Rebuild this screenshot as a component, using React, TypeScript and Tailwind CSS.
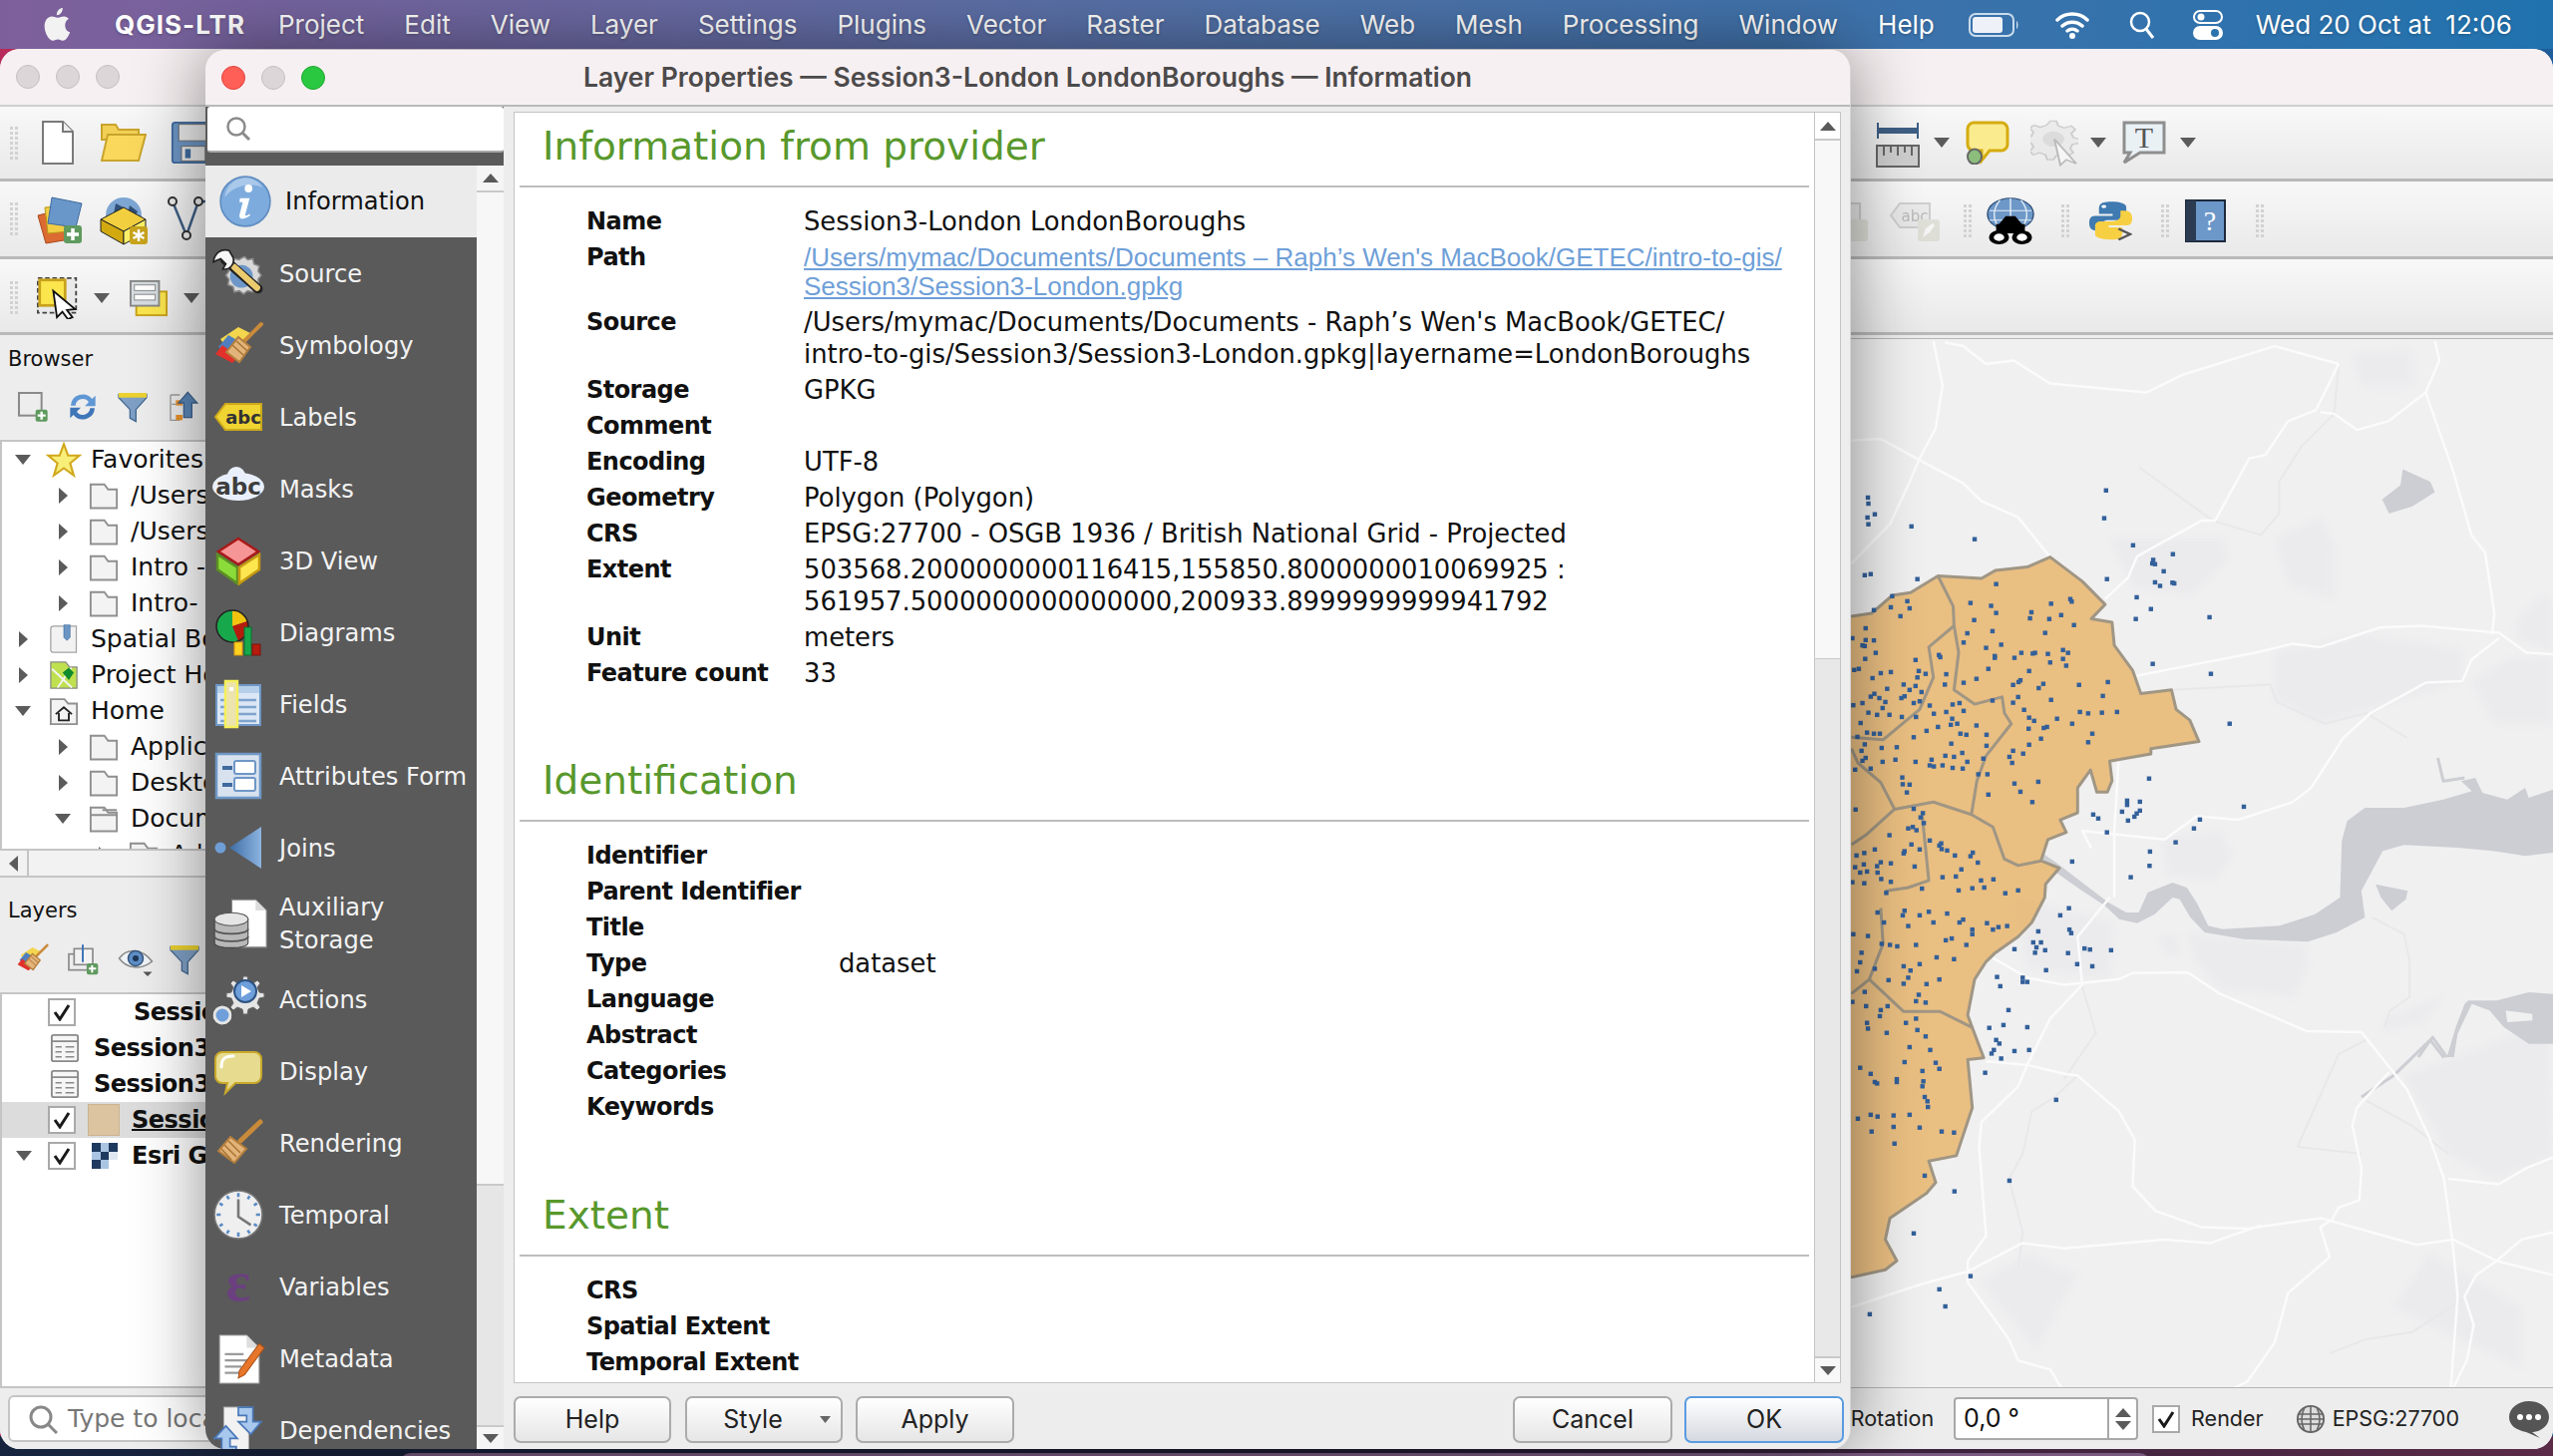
import type { ReactNode } from 'react';

type Pt = [number, number];

// coordinates below were read off crops of the map, these turn them into page pixels
const top = (p: Pt[]) => p.map(([x, y]) => `${(1840 + x / 2.178).toFixed(1)},${(340 + y / 2.8).toFixed(1)}`).join(' ');
const low = (p: Pt[]) => p.map(([x, y]) => `${(1840 + x / 2.178).toFixed(1)},${(900 + y / 2.8).toFixed(1)}`).join(' ');
const mid = (p: Pt[]) => p.map(([x, y]) => `${(2000 + x / 2.8).toFixed(1)},${(760 + y / 3).toFixed(1)}`).join(' ');

const boroughEdgeTop: Pt[] = [[-900, 778], [36, 778], [80, 770], [125, 720], [165, 712], [225, 665], [320, 672], [350, 650], [420, 640], [470, 612], [540, 680], [590, 745], [560, 785], [605, 795], [610, 860], [650, 930], [668, 995], [735, 985], [745, 1040], [775, 1070], [795, 1130], [690, 1150], [690, 1165], [600, 1185], [605, 1240], [595, 1272], [572, 1272], [558, 1210], [530, 1260], [530, 1330], [492, 1350], [505, 1385], [465, 1405], [450, 1465], [490, 1485], [460, 1530]];
const boroughEdgeLow: Pt[] = [[458, 0], [430, 70], [400, 110], [350, 155], [330, 180], [305, 230], [290, 330], [300, 365], [325, 450], [290, 455], [300, 590], [265, 725], [205, 740], [220, 800], [200, 830], [120, 900], [110, 960], [135, 1020], [110, 1045], [40, 1065], [-900, 1065]];

const innerTop: Pt[][] = [
  [[225, 665], [258, 750], [260, 805], [270, 880], [260, 985], [305, 1025], [365, 1005], [370, 1050], [385, 1080], [330, 1170], [310, 1240], [298, 1335]],
  [[260, 805], [205, 865], [215, 950], [185, 1040], [105, 1125], [36, 1118]],
  [[36, 1150], [50, 1190], [100, 1245], [130, 1320], [215, 1300], [298, 1335], [345, 1370], [370, 1460], [400, 1478], [450, 1465]],
  [[130, 1320], [70, 1390], [36, 1420]],
  [[190, 1330], [205, 1520], [160, 1540], [110, 1550]],
];
const innerLow: Pt[][] = [
  [[100, 30], [105, 130], [75, 230], [150, 320], [230, 320], [300, 365]],
  [[75, 230], [36, 270]],
];

const roadsTop: Pt[][] = [
  [[215, 5], [235, 130], [220, 250], [185, 335], [160, 410], [120, 520], [36, 630]],
  [[36, 285], [100, 280], [185, 340], [280, 405], [320, 455], [400, 500], [470, 612]],
  [[240, 10], [280, 20], [330, 70], [390, 60], [470, 125], [680, 150], [760, 100], [960, 20], [1100, 70]],
  [[1100, 70], [1050, 200], [990, 230], [940, 325], [905, 335], [830, 510], [800, 510], [660, 610], [640, 670], [590, 730]],
  [[1060, 205], [1090, 210], [1140, 255], [1210, 230], [1290, 150], [1320, 60], [1310, 5]],
  [[1290, 150], [1350, 370], [1390, 550], [1420, 600], [1440, 770], [1435, 830]],
  [[660, 945], [920, 880], [1000, 855], [1060, 865], [1190, 810], [1280, 805], [1450, 825], [1510, 880], [1568, 885]],
  [[1450, 840], [1390, 900], [1370, 960], [1290, 965], [1170, 1050], [1110, 1120], [1040, 1260], [1000, 1300], [880, 1350], [790, 1340], [720, 1405], [610, 1390], [540, 1380], [560, 1430]],
  [[620, 1170], [610, 1380], [610, 1568]],
];
const roadsLow: Pt[][] = [
  [[600, 0], [530, 110], [540, 245], [470, 340], [420, 470], [400, 530], [320, 630], [315, 700], [330, 950], [290, 1020], [290, 1080], [380, 1240], [400, 1300], [470, 1325], [495, 1378]],
  [[345, 170], [420, 225], [500, 245], [620, 230], [650, 212], [770, 210], [840, 270], [1030, 375], [1150, 378], [1250, 540], [1300, 680], [1330, 790], [1350, 980], [1360, 1120], [1345, 1378]],
  [[330, 460], [420, 470], [500, 495], [530, 500], [620, 600], [655, 680], [650, 810], [700, 880], [800, 925], [900, 930], [1060, 900], [1200, 950], [1270, 975], [1350, 960], [1445, 1020], [1568, 1060]],
  [[36, 1150], [190, 1085], [290, 1050], [410, 970], [500, 985], [720, 960], [820, 970], [930, 920]],
  [[1210, 490], [1140, 590], [1130, 640], [1150, 760], [1145, 850], [1100, 870], [1085, 905], [1060, 925], [1080, 1010], [990, 1110], [960, 1250], [900, 1360], [870, 1378]],
  [[1445, 1020], [1400, 1060], [1375, 1120], [1395, 1200], [1380, 1300], [1350, 1378]],
  [[1445, 1020], [1500, 960], [1568, 940]],
  [[1340, 790], [1450, 805], [1510, 760], [1568, 730]],
];

const dotsTop: Pt[] = [[592, 425], [588, 503], [651, 579], [738, 604], [695, 620], [693, 630], [699, 632], [718, 652], [594, 674], [699, 683], [710, 693], [737, 684], [741, 686], [659, 725], [690, 758], [657, 786], [818, 781], [694, 912], [821, 940], [862, 1080], [686, 1234], [893, 1313], [638, 1296], [638, 1308], [666, 1299], [627, 1327], [666, 1324], [659, 1332], [654, 1341], [640, 1352], [564, 1335], [575, 1346], [594, 1385], [797, 1349], [784, 1374], [744, 1413], [688, 1439], [687, 1479], [646, 1511], [518, 1467], [72, 445], [73, 462], [87, 492], [71, 501], [73, 520], [167, 526], [305, 562], [65, 663], [78, 660], [180, 674], [125, 722], [85, 761], [122, 753], [158, 736], [163, 756], [143, 778], [352, 688], [296, 741], [341, 749], [352, 769], [304, 789], [289, 826], [344, 820], [281, 852], [330, 867], [363, 858], [349, 890], [349, 895], [407, 881], [392, 895], [432, 883], [437, 881], [465, 884], [498, 873], [509, 881], [498, 898], [470, 908], [505, 917], [424, 932], [335, 926], [309, 954], [281, 965], [240, 970], [243, 941], [405, 958], [401, 963], [389, 971], [445, 980], [455, 968], [533, 971], [596, 963], [585, 1002], [472, 1013], [400, 1005], [389, 1021], [344, 1015], [413, 1041], [535, 1047], [553, 1051], [583, 1049], [616, 1047], [424, 1063], [435, 1072], [485, 1066], [518, 1080], [423, 1094], [456, 1092], [463, 1089], [562, 1108], [553, 1132], [450, 1122], [424, 1139], [389, 1156], [411, 1164], [381, 1173], [387, 1190], [324, 1178], [333, 1222], [313, 1222], [392, 1248], [444, 1243], [405, 1271], [335, 1279], [431, 1300], [472, 743], [514, 730], [517, 737], [429, 767], [426, 784], [468, 786], [494, 775], [522, 803], [459, 825], [67, 812], [38, 840], [67, 845], [85, 846], [60, 860], [65, 862], [89, 881], [66, 898], [176, 901], [227, 887], [230, 893], [42, 929], [52, 926], [100, 938], [122, 935], [183, 932], [198, 940], [180, 950], [82, 952], [150, 970], [176, 974], [163, 985], [114, 982], [86, 996], [78, 1004], [97, 1008], [145, 1008], [152, 1003], [189, 991], [110, 1019], [60, 1022], [40, 1028], [172, 1022], [185, 1017], [207, 1029], [257, 1026], [272, 1022], [281, 1044], [243, 1047], [216, 1052], [104, 1036], [73, 1049], [92, 1055], [119, 1055], [146, 1061], [177, 1061], [256, 1066], [225, 1089], [267, 1080], [253, 1083], [309, 1085], [56, 1078], [70, 1105], [85, 1108], [98, 1108], [49, 1117], [200, 1100], [172, 1118], [274, 1108], [287, 1111], [331, 1111], [254, 1136], [331, 1142], [65, 1138], [102, 1148], [135, 1146], [58, 1156], [67, 1176], [60, 1184], [132, 1181], [104, 1187], [176, 1187], [211, 1181], [207, 1197], [216, 1200], [235, 1197], [241, 1170], [260, 1173], [278, 1162], [289, 1187], [257, 1204], [279, 1206], [78, 1206], [44, 1209], [147, 1231], [148, 1250], [163, 1251], [157, 1273], [45, 1321], [172, 1319], [192, 1331], [187, 1343], [194, 1359], [160, 1374], [170, 1370], [178, 1379], [119, 1393], [207, 1408], [232, 1416], [228, 1422], [233, 1432], [245, 1436], [167, 1419], [87, 1433], [152, 1438], [150, 1444], [185, 1433], [64, 1443], [47, 1450], [262, 1450], [301, 1442], [296, 1452], [312, 1470], [122, 1472], [100, 1469], [92, 1480], [63, 1475], [44, 1483], [174, 1481], [276, 1489], [55, 1498], [70, 1495], [93, 1498], [101, 1516], [122, 1524], [235, 1511], [264, 1509], [346, 1517], [319, 1520], [300, 1542], [326, 1540], [400, 1548], [372, 1556], [270, 1548], [64, 1528], [38, 1525], [190, 1543], [112, 1555]];
const dotsLow: Pt[] = [[93, 42], [107, 70], [152, 37], [148, 50], [185, 50], [205, 40], [215, 70], [245, 45], [160, 80], [272, 70], [280, 62], [300, 90], [300, 103], [332, 72], [345, 90], [357, 83], [376, 80], [72, 108], [40, 103], [102, 130], [120, 133], [136, 137], [177, 133], [242, 120], [255, 115], [287, 133], [58, 155], [55, 182], [222, 168], [260, 173], [150, 193], [165, 205], [185, 187], [87, 200], [48, 207], [117, 232], [160, 225], [228, 230], [150, 242], [200, 243], [65, 265], [183, 273], [177, 291], [198, 295], [38, 293], [68, 305], [115, 305], [100, 316], [98, 333], [177, 340], [70, 352], [155, 352], [72, 368], [180, 372], [113, 380], [198, 390], [163, 420], [208, 428], [152, 462], [220, 464], [228, 481], [55, 478], [78, 495], [191, 487], [135, 510], [135, 518], [92, 522], [87, 518], [193, 516], [191, 530], [196, 560], [202, 572], [203, 588], [50, 621], [78, 610], [93, 615], [128, 612], [163, 610], [128, 644], [185, 646], [80, 657], [233, 657], [260, 660], [130, 691], [196, 781], [511, 30], [492, 50], [444, 95], [512, 90], [516, 100], [433, 126], [450, 126], [440, 140], [437, 155], [459, 148], [392, 145], [509, 156], [545, 143], [557, 146], [603, 148], [529, 187], [562, 193], [461, 204], [354, 223], [410, 225], [410, 237], [420, 237], [361, 249], [379, 316], [337, 366], [368, 358], [420, 364], [352, 400], [359, 410], [347, 428], [342, 438], [392, 431], [424, 428], [363, 452], [328, 492], [483, 568], [381, 795], [261, 825], [172, 943], [296, 1063], [228, 1100], [241, 1148], [76, 1170]];

const MapCanvas = () => (
  <svg viewBox="600 340 1960 1052" className="block w-[1960px] h-[1052px]">
    <rect x="600" y="340" width="1960" height="1052" fill="#f0f0f1" />
    <g fill="#ebebed" className="blur-[3px]">
      <polygon points={top([[600, 560], [760, 560], [850, 560], [860, 620], [780, 720], [650, 700]])} />
      <polygon points={top([[960, 560], [1060, 500], [1090, 580], [1090, 730], [990, 690]])} />
      <polygon points={top([[960, 880], [1150, 830], [1370, 870], [1370, 960], [1170, 1040], [1060, 1080], [960, 1010]])} />
      <polygon points={top([[1130, 40], [1260, 30], [1260, 130], [1150, 130]])} />
      <polygon points={top([[1490, 790], [1540, 720], [1568, 730], [1568, 880], [1490, 840]])} />
      <polygon points={top([[1390, 960], [1470, 900], [1568, 890], [1568, 1080], [1440, 1080]])} />
      <polygon points={mid([[470, 240], [630, 220], [670, 290], [620, 370], [480, 350]])} />
      <polygon points={mid([[570, 620], [540, 530], [870, 560], [880, 630], [840, 720], [640, 700]])} />
      <polygon points={mid([[460, 540], [510, 530], [520, 600], [480, 590]])} />
      <polygon points={mid([[1100, 780], [1260, 720], [1200, 800], [1090, 820]])} />
      <polygon points={low([[1240, 500], [1560, 350], [1568, 730], [1440, 790], [1340, 720]])} />
      <polygon points={low([[1220, 1150], [1300, 1000], [1500, 1150], [1500, 1320], [1380, 1250]])} />
      <polygon points={low([[320, 1080], [420, 1000], [530, 1060], [440, 1270]])} />
      <polygon points={low([[390, 0], [610, 70], [600, 230], [420, 200]])} />
    </g>
    <g fill="none" stroke="#e8e8ea" strokeWidth="2" className="blur-[0.5px]">
      <polyline points={top([[665, 360], [825, 510], [930, 550], [970, 490], [970, 400], [1020, 300], [1090, 210], [1100, 70]])} />
      <polyline points={top([[740, 985], [950, 970], [965, 1020], [1070, 1080], [1160, 1050], [1250, 1120]])} />
      <polyline points={low([[530, 500], [480, 560], [430, 600], [410, 720], [380, 790], [410, 940], [400, 1040]])} />
      <polyline points={low([[1010, 700], [1100, 440], [1160, 400]])} />
      <polyline points={low([[1010, 700], [1150, 720]])} />
      <polyline points={low([[540, 250], [570, 380], [500, 510]])} />
      <polyline points={low([[1160, 570], [1260, 640], [1340, 720]])} />
      <polyline points={low([[1080, 1280], [1160, 1240], [1260, 1220], [1370, 1130]])} />
      <polyline points={mid([[1060, 480], [1150, 530], [1165, 610], [1165, 720], [1110, 760], [1095, 810]])} />
    </g>
    <g fill="#cdced3">
      <polygon points={top([[1240, 365], [1300, 400], [1310, 430], [1260, 470], [1210, 490], [1195, 450], [1235, 410]])} />
      <polygon points={mid([[1568, 95], [1500, 120], [1490, 90], [1440, 125], [1370, 105], [1350, 60], [1310, 70], [1340, 100], [1260, 125], [1150, 150], [1040, 150], [990, 190], [975, 250], [970, 420], [900, 470], [800, 505], [640, 515], [600, 505], [570, 440], [540, 390], [500, 375], [430, 405], [405, 465], [370, 465], [320, 435], [240, 370], [180, 320], [140, 290], [135, 305], [180, 350], [240, 395], [310, 445], [350, 485], [400, 497], [450, 470], [500, 420], [520, 425], [550, 480], [590, 525], [700, 545], [880, 553], [960, 525], [1040, 480], [1030, 400], [1060, 340], [1090, 280], [1150, 262], [1300, 270], [1400, 280], [1490, 295], [1568, 285]])} />
      <polygon points={mid([[1330, 730], [1410, 730], [1500, 705], [1568, 710], [1568, 860], [1500, 860], [1430, 810], [1390, 760], [1340, 740], [1300, 830], [1290, 900], [1270, 900], [1295, 810], [1320, 740]])} />
      <polygon points={mid([[1070, 380], [1160, 400], [1155, 425], [1115, 460], [1085, 420]])} />
      <polygon points={mid([[1435, 760], [1510, 770], [1510, 790], [1440, 795]])} fill="#f0f0f1" />
    </g>
    <g fill="none" stroke="#cdced3" strokeWidth="3" strokeLinejoin="round">
      <polyline points={mid([[1245, 0], [1260, 70], [1320, 60]])} />
      <polyline points={low([[1330, 450], [1300, 400], [1220, 500], [1150, 560]])} />
      <polyline points={mid([[1190, 900], [1230, 840], [1270, 900]])} />
    </g>
    <g fill="none" stroke="#fbfbfb" strokeWidth="2.5" strokeLinejoin="round">
      {roadsTop.map((r, i) => <polyline key={i} points={top(r)} />)}
      {roadsLow.map((r, i) => <polyline key={i} points={low(r)} />)}
    </g>
    <polygon points={`${top(boroughEdgeTop)} ${low(boroughEdgeLow)}`} fill="#e8b56c" fillOpacity="0.84" stroke="#a09684" strokeWidth="3" strokeLinejoin="round" />
    <g fill="none" stroke="#a09684" strokeWidth="3" strokeLinejoin="round">
      {innerTop.map((r, i) => <polyline key={i} points={top(r)} />)}
      {innerLow.map((r, i) => <polyline key={i} points={low(r)} />)}
    </g>
    <g fill="#33609a">
      {dotsTop.map(([x, y], i) => <rect key={i} x={1840 + x / 2.178 - 2.2} y={340 + y / 2.8 - 2.2} width="4.400" height="4.400" />)}
      {dotsLow.map(([x, y], i) => <rect key={i} x={1840 + x / 2.178 - 2.2} y={900 + y / 2.8 - 2.2} width="4.400" height="4.400" />)}
    </g>
  </svg>
);

// --- small shared icons ---

const Ico = ({ s = 48, vb = 48, children }: { s?: number; vb?: number; children: ReactNode }) => (
  <svg width={s} height={s} viewBox={`0 0 ${vb} ${vb}`} className="shrink-0 overflow-visible">{children}</svg>
);

const Grip = () => (
  <div className="grid grid-cols-2 gap-x-[2px] gap-y-[2px] w-[8px] shrink-0">
    {Array.from({ length: 14 }).map((_, i) => <div key={i} className="w-[3px] h-[3px] bg-[#d2d2d2]" />)}
  </div>
);

const Caret = ({ cls = '' }: { cls?: string }) => (
  <svg width="16" height="10" viewBox="0 0 16 10" className={`shrink-0 ${cls}`}><path d="M0 0h16L8 10z" fill="#5b5b5b" /></svg>
);

const Folder = ({ open = false }: { open?: boolean }) => (
  <Ico s={30}>
    <path d="M3 6h22l6 8h14v30H3z" fill="#f3f3f3" stroke="#8f8f8f" strokeWidth="3" />
    {open && <path d="M3 18h42M22 10h23" stroke="#8f8f8f" strokeWidth="3" fill="none" />}
  </Ico>
);

const Broom = ({ s = 48 }: { s?: number }) => (
  <Ico s={s}>
    <path d="M46 3 26 22" stroke="#c98a3a" strokeWidth="5" strokeLinecap="round" />
    <path d="M16 18 32 30 20 44 4 32z" fill="#e3b47a" stroke="#b57f3d" strokeWidth="2" />
    <path d="M10 26 22 38M14 22 26 34M7 30 17 41" stroke="#a87435" strokeWidth="1.5" />
  </Ico>
);

const ColorBroom = ({ s = 48 }: { s?: number }) => (
  <Ico s={s}>
    <path d="M6 18 24 6l12 6-16 26z" fill="#f3d64e" />
    <path d="M4 26 14 14l14 8-10 14z" fill="#4f7fc0" />
    <path d="M1 33 8 24l16 12-6 6z" fill="#e2302a" />
    <path d="M47 3 30 20" stroke="#c98a3a" strokeWidth="4" strokeLinecap="round" />
    <path d="M24 16 36 26 25 41 12 31z" fill="#e3b47a" stroke="#b57f3d" strokeWidth="2" />
    <path d="M18 24 29 34M22 20 33 30" stroke="#a87435" strokeWidth="1.5" />
  </Ico>
);

const Funnel = ({ s = 32 }: { s?: number }) => (
  <Ico s={s}>
    <path d="M3 5h42v5L29 28v18l-9-5V28L3 10z" fill="#7f9fc4" stroke="#466a94" strokeWidth="2" />
    <rect x="3" y="3" width="42" height="7" fill="#ecd22f" />
  </Ico>
);

const TableIcon = () => (
  <Ico s={30}>
    <rect x="3" y="3" width="42" height="42" rx="3" fill="#f6f6f6" stroke="#8a8a8a" strokeWidth="3" />
    <path d="M3 13h42M9 22h10M25 22h14M9 30h10M25 30h14M9 38h10M25 38h14" stroke="#8a8a8a" strokeWidth="2.5" />
  </Ico>
);

const Check = () => (
  <span className="w-[28px] h-[28px] shrink-0 border-2 border-[#a9a9a9] bg-white flex items-center justify-center">
    <svg width="18" height="18" viewBox="0 0 18 18"><path d="M2 9l5 7L16 2" fill="none" stroke="#1a1a1a" strokeWidth="3" /></svg>
  </span>
);

// --- sidebar icons ---

const iconInfo = (
  <Ico s={52}>
    <circle cx="24" cy="24" r="23" fill="#7dabdd" stroke="#5e8cc0" strokeWidth="1.5" />
    <path d="M5 20A19 19 0 0 1 40 11 30 30 0 0 0 5 20z" fill="#a9c8ea" />
    <circle cx="27" cy="12" r="3.600" fill="#fff" />
    <path d="M19 21h9l-4 15c-.4 1.600 1.400 1.400 4-.4l.6 1.200c-4 3.800-11 5-10-.4l3-11.600h-3z" fill="#fff" />
  </Ico>
);
const iconSource = (
  <Ico s={50}>
    <path d="M26 10l4-2 3 3 5-1 1 5 5 2-1 5 3 4-3 4 1 5-5 2-1 5-5-1-4 3-4-3-5 1-1-5-5-2 1-5-3-4 3-4-1-5 5-2 1-5 5 1z" fill="#d8d8d8" stroke="#888" strokeWidth="1.5" />
    <circle cx="27" cy="27" r="11" fill="#6d97c9" />
    <path d="M11 11l32 28" stroke="#222" strokeWidth="9" strokeLinecap="round" />
    <path d="M20 18l22 20" stroke="#eccb6f" strokeWidth="6" strokeLinecap="round" />
    <path d="M15 2C7 0 1 5 0 13l7-3 5 5-3 5c6 1 12-4 10-11z" fill="#f5f5f5" stroke="#222" strokeWidth="1.6" />
  </Ico>
);
const iconLabels = (
  <Ico>
    <path d="M1 24 11 11h36v26H11z" fill="#f0d432" stroke="#cda91b" strokeWidth="2" />
    <text x="29" y="31" textAnchor="middle" fontFamily="DejaVu Sans" fontWeight="700" fontSize="18" fill="#333">abc</text>
  </Ico>
);
const iconMasks = (
  <Ico s={54} vb={54}>
    <ellipse cx="27" cy="25" rx="26" ry="14" fill="#eaf0fb" />
    <circle cx="25" cy="14" r="9" fill="#eaf0fb" />
    <text x="27" y="33" textAnchor="middle" fontFamily="DejaVu Sans" fontWeight="700" fontSize="23" fill="#3d3d3d">abc</text>
  </Ico>
);
const icon3d = (
  <Ico>
    <path d="M24 2 44 15 24 28 4 15z" fill="#f69595" stroke="#a81a1a" strokeWidth="2.5" />
    <path d="M3 18 23 31v16L3 33z" fill="#8bdc3a" stroke="#5c8f23" strokeWidth="2.5" />
    <path d="M45 18 25 31v16l20-14z" fill="#fde64e" stroke="#c59a12" strokeWidth="2.5" />
  </Ico>
);
const iconDiagrams = (
  <Ico>
    <path d="M18 18V2a16 16 0 0 1 15 11z" fill="#f1c40f" />
    <path d="M18 18 33 13a16 16 0 0 1-9 20z" fill="#b61c0e" />
    <path d="M18 18l6 15A16 16 0 1 1 18 2z" fill="#18a84c" />
    <circle cx="18" cy="18" r="16" fill="none" stroke="#222" strokeWidth="1.5" />
    <rect x="20" y="34" width="8" height="13" fill="#ffd21f" stroke="#d99a12" />
    <rect x="30" y="19" width="7" height="28" fill="#18a84c" stroke="#0b6e2d" />
    <rect x="38" y="36" width="8" height="11" fill="#b61c0e" stroke="#7a100a" />
  </Ico>
);
const iconFields = (
  <Ico>
    <rect x="2" y="5" width="44" height="40" fill="#dbe7f5" stroke="#6e97c6" strokeWidth="2" />
    <rect x="3" y="6" width="42" height="7" fill="#b5cfea" />
    <path d="M22 20h20M22 27h20M22 34h20M22 41h20M6 20h6M6 27h6M6 34h6M6 41h6" stroke="#7fa3cd" strokeWidth="2.5" />
    <rect x="11" y="1" width="12" height="46" fill="#ece3ad" stroke="#f6f05a" strokeWidth="2.5" />
    <rect x="15" y="7" width="4" height="4" fill="#fff" />
  </Ico>
);
const iconAttrs = (
  <Ico>
    <rect x="2" y="2" width="44" height="44" fill="#d8e2ef" stroke="#6e97c6" strokeWidth="2.5" />
    <rect x="8" y="14" width="10" height="4" fill="#3f6a9d" />
    <rect x="20" y="9" width="21" height="13" rx="2" fill="#fff" stroke="#6e97c6" strokeWidth="2" />
    <rect x="8" y="31" width="10" height="4" fill="#3f6a9d" />
    <rect x="20" y="26" width="21" height="13" rx="2" fill="#fff" stroke="#6e97c6" strokeWidth="2" />
  </Ico>
);
const iconJoins = (
  <Ico>
    <circle cx="6" cy="24" r="5.500" fill="#6f9ed6" />
    <defs><linearGradient id="joinFill" x1="0" x2="1"><stop offset="0" stopColor="#3d6da6" /><stop offset="1" stopColor="#8db4e0" /></linearGradient></defs>
    <path d="M15 24 47 3v42z" fill="url(#joinFill)" />
  </Ico>
);
const iconAux = (
  <Ico s={52}>
    <path d="M18 2h22l10 10v34H18z" fill="#fff" stroke="#8a8a8a" />
    <path d="M40 2v10h10z" fill="#dcdcdc" />
    <path d="M2 20v22c0 6 31 6 31 0V20z" fill="#b8b8b8" stroke="#444" />
    <ellipse cx="17.500" cy="20" rx="15.500" ry="6" fill="#e5e5e5" stroke="#555" />
    <path d="M2 29c0 6 31 6 31 0M2 36c0 6 31 6 31 0" fill="none" stroke="#555" strokeWidth="1.6" />
  </Ico>
);
const gearTeeth = 'M32 2l4 0 1 5 5 2 4-3 3 3-3 4 2 5 5 1v4l-5 1-2 5 3 4-3 3-4-3-5 2-1 5h-4l-1-5-5-2-4 3-3-3 3-4-2-5-5-1v-4l5-1 2-5-3-4 3-3 4 3 5-2z';
const iconActions = (
  <Ico s={54} vb={54}>
    <path d={gearTeeth} fill="#e5e5e5" stroke="#666" transform="translate(0 2)" />
    <circle cx="34" cy="19" r="11" fill="#6e9fda" stroke="#2d5282" strokeWidth="2" />
    <path d="M30 13l10 6-10 6z" fill="#fff" />
    <circle cx="11" cy="43" r="8" fill="#6e9fda" stroke="#e5e5e5" strokeWidth="3" />
    <circle cx="11" cy="43" r="10" fill="none" stroke="#555" strokeDasharray="3 3" />
  </Ico>
);
const iconDisplay = (
  <Ico>
    <path d="M8 5h32c4 0 7 3 7 7v17c0 4-3 7-7 7H21L11 46l2-10H8c-4 0-7-3-7-7V12c0-4 3-7 7-7z" fill="#e7db8f" stroke="#c9a92a" strokeWidth="2" />
    <path d="M7 20c0-8 3-11 12-11" stroke="#fff" strokeWidth="3" fill="none" strokeLinecap="round" />
  </Ico>
);
const iconClock = (
  <Ico s={50}>
    <circle cx="24" cy="24" r="23" fill="#efefef" stroke="#777" strokeWidth="1.5" />
    <path d="M24 3v4M24 41v4M3 24h4M41 24h4M13 6l2 3M35 6l-2 3M6 13l3 2M42 13l-3 2M6 35l3-2M42 35l-3-2M13 42l2-3M35 42l-2-3" stroke="#5b8bc4" strokeWidth="2.5" />
    <path d="M24 9v17l12 8" fill="none" stroke="#777" strokeWidth="2.5" />
  </Ico>
);
const iconVars = (
  <Ico>
    <text x="24" y="38" textAnchor="middle" fontFamily="Liberation Serif" fontWeight="700" fontSize="58" fill="#6b3f80">ε</text>
  </Ico>
);
const iconMeta = (
  <Ico s={50}>
    <path d="M6 2h26l12 12v34H6z" fill="#fff" stroke="#aaa" />
    <path d="M32 2v12h12z" fill="#ddd" />
    <path d="M11 20h18M11 26h22M11 32h16M11 38h18" stroke="#9a9a9a" strokeWidth="2" />
    <path d="M44 10l5 4-19 26-6 3 1-7z" fill="#e8762a" stroke="#a8521a" />
  </Ico>
);
const iconDeps = (
  <Ico s={50}>
    <path d="M10 2h24v46H10z" fill="#f2f2f2" stroke="#aaa" />
    <path d="M24 10V2h14v14h8L36 28 24 16h8v-6z" fill="#a9c8ee" stroke="#4a78b8" strokeWidth="1.6" />
    <path d="M22 40v8H8V32H1l11-12 11 12h-7v8z" fill="#a9c8ee" stroke="#4a78b8" strokeWidth="1.6" />
  </Ico>
);

const sidebar: { label: string[]; icon: ReactNode }[] = [
  { label: ['Source'], icon: iconSource },
  { label: ['Symbology'], icon: <ColorBroom /> },
  { label: ['Labels'], icon: iconLabels },
  { label: ['Masks'], icon: iconMasks },
  { label: ['3D View'], icon: icon3d },
  { label: ['Diagrams'], icon: iconDiagrams },
  { label: ['Fields'], icon: iconFields },
  { label: ['Attributes Form'], icon: iconAttrs },
  { label: ['Joins'], icon: iconJoins },
  { label: ['Auxiliary', 'Storage'], icon: iconAux },
  { label: ['Actions'], icon: iconActions },
  { label: ['Display'], icon: iconDisplay },
  { label: ['Rendering'], icon: <Broom /> },
  { label: ['Temporal'], icon: iconClock },
  { label: ['Variables'], icon: iconVars },
  { label: ['Metadata'], icon: iconMeta },
  { label: ['Dependencies'], icon: iconDeps },
];

const Row = ({ label, children, wide }: { label: string; children?: ReactNode; wide?: boolean }) => (
  <div className={`grid ${wide ? 'grid-cols-[253px_1fr]' : 'grid-cols-[218px_1fr]'} py-[2px] leading-[32px] pl-[72px]`}>
    <b className="font-bold text-[24px] tracking-[-0.55px]">{label}</b>
    <div>{children}</div>
  </div>
);

const Heading = ({ title, cls = '' }: { title: string; cls?: string }) => (
  <div className={`h-[75px] mx-[5px] border-b-2 border-[#bdbdbd] ${cls}`}>
    <div className="pl-[23px] pt-[11px] text-[39px] leading-[46px] text-[#58982c]">{title}</div>
  </div>
);

const DlgButton = ({ children, w, cls = '' }: { children: ReactNode; w: string; cls?: string }) => (
  <div className={`${w} h-[47px] rounded-[7px] border-2 border-[#ababab] bg-gradient-to-b from-white to-[#e6e6e6] flex items-center justify-center font-['Inter',sans-serif] text-[25px] text-[#222] ${cls}`}>
    {children}
  </div>
);

const ScrollArrow = ({ up }: { up?: boolean }) => (
  <svg width="16" height="9" viewBox="0 0 16 9"><path d={up ? 'M8 0l8 9H0z' : 'M8 9l8-9H0z'} fill="#5a5a5a" /></svg>
);

const Dialog = () => (
  <div className="absolute left-[206px] top-[50px] w-[1650px] h-[1403px] rounded-[20px] bg-[#ededed] overflow-hidden flex flex-col shadow-[0_0_70px_rgba(0,0,0,0.45)] border-r border-[#d5d5d5]">
    <div className="h-[57px] shrink-0 bg-[#f7f0f2] border-b-2 border-[#b9b9b9] flex items-center relative pl-[16px] gap-[16px]">
      <span className="w-[24px] h-[24px] rounded-full bg-[#ff5f57] border border-[#e0443e]" />
      <span className="w-[24px] h-[24px] rounded-full bg-[#dcd6d8] border border-[#c4bfc1]" />
      <span className="w-[24px] h-[24px] rounded-full bg-[#2ac840] border border-[#1fa82f]" />
      <div className="ml-[243px] text-[26.500px] font-semibold text-[#4c4a4b] font-['Inter',sans-serif] whitespace-nowrap">Layer Properties — Session3-London LondonBoroughs — Information</div>
    </div>
    <div className="flex-1 flex min-h-0">
      <div className="w-[299px] shrink-0 bg-[#5a5a5a] flex flex-col">
        <div className="h-[46px] shrink-0 ml-[2px] bg-white border-b-2 border-[#a8a8a8] rounded-[3px] flex items-center pl-[18px]">
          <svg width="26" height="26" viewBox="0 0 26 26"><circle cx="11" cy="11" r="8.500" fill="none" stroke="#8b8b8b" strokeWidth="2.5" /><path d="M17 17l7 7" stroke="#8b8b8b" strokeWidth="3" /></svg>
        </div>
        <div className="h-[13px] shrink-0" />
        <div className="flex-1 flex min-h-0">
          <div className="w-[272px] shrink-0 overflow-hidden text-[24.200px]">
            <div className="h-[72px] bg-[#ebebeb] flex items-center pl-[14px] gap-[14px] text-[#111]">
              {iconInfo}
              <span>Information</span>
            </div>
            {sidebar.map((item) => (
              <div key={item.label[0]} className={`${item.label.length > 1 ? 'h-[80px]' : 'h-[72px]'} flex items-center pl-[7px] gap-[16px] text-[#f2f2f2]`}>
                <div className="w-[51px] h-[54px] flex items-center justify-center shrink-0">{item.icon}</div>
                <div className="pt-[2px] leading-[33px] whitespace-nowrap">
                  {item.label.map((l) => <div key={l}>{l}</div>)}
                </div>
              </div>
            ))}
          </div>
          <div className="w-[27px] shrink-0 bg-[#e6e6e6] flex flex-col">
            <div className="h-[27px] bg-[#f5f5f5] border-b-2 border-[#c9c9c9] flex items-center justify-center"><ScrollArrow up /></div>
            <div className="h-[996px] bg-[#f7f7f7] border-b-2 border-[#c9c9c9]" />
            <div className="flex-1" />
            <div className="h-[24px] bg-[#f5f5f5] border-t-2 border-[#c9c9c9] flex items-center justify-center"><ScrollArrow /></div>
          </div>
        </div>
      </div>
      <div className="flex-1 min-w-0 flex flex-col pl-[10px] pt-[5px] pr-[9px] bg-[#ededed]">
        <div className="h-[1275px] shrink-0 flex border border-[#c4c4c4] bg-white text-[25.800px]">
          <div className="flex-1 min-w-0 overflow-hidden bg-white">
            <Heading title="Information from provider" />
            <div className="pt-[16px]">
              <Row label="Name">Session3-London LondonBoroughs</Row>
              <div className="grid grid-cols-[218px_1fr] pl-[72px] pt-[4px] pb-[3px]">
                <b className="font-bold leading-[29px] text-[24px] tracking-[-0.55px]">Path</b>
                <div className="font-['Liberation_Sans',sans-serif] text-[26px] leading-[29px] text-[#6f9fd8] underline whitespace-nowrap">
                  <div>/Users/mymac/Documents/Documents – Raph’s Wen's MacBook/GETEC/intro-to-gis/</div>
                  <div>Session3/Session3-London.gpkg</div>
                </div>
              </div>
              <Row label="Source">
                <div className="whitespace-nowrap">/Users/mymac/Documents/Documents - Raph’s Wen's MacBook/GETEC/</div>
                <div className="whitespace-nowrap">intro-to-gis/Session3/Session3-London.gpkg|layername=LondonBoroughs</div>
              </Row>
              <Row label="Storage">GPKG</Row>
              <Row label="Comment" />
              <Row label="Encoding">UTF-8</Row>
              <Row label="Geometry">Polygon (Polygon)</Row>
              <Row label="CRS">EPSG:27700 - OSGB 1936 / British National Grid - Projected</Row>
              <Row label="Extent">
                <div>503568.2000000000116415,155850.8000000010069925 :</div>
                <div>561957.5000000000000000,200933.8999999999941792</div>
              </Row>
              <Row label="Unit">meters</Row>
              <Row label="Feature count">33</Row>
            </div>
            <Heading title="Identification" cls="mt-[56px]" />
            <div className="pt-[16px]">
              <Row wide label="Identifier" />
              <Row wide label="Parent Identifier" />
              <Row wide label="Title" />
              <Row wide label="Type">dataset</Row>
              <Row wide label="Language" />
              <Row wide label="Abstract" />
              <Row wide label="Categories" />
              <Row wide label="Keywords" />
            </div>
            <Heading title="Extent" cls="mt-[57px]" />
            <div className="pt-[16px]">
              <Row wide label="CRS" />
              <Row wide label="Spatial Extent" />
              <Row wide label="Temporal Extent" />
            </div>
          </div>
          <div className="w-[26px] shrink-0 border-l border-[#c4c4c4] bg-[#e8e8e8] flex flex-col">
            <div className="h-[28px] shrink-0 bg-white border-b-2 border-[#c9c9c9] flex items-center justify-center"><ScrollArrow up /></div>
            <div className="h-[520px] shrink-0 bg-[#f8f8f8] border-b border-[#c9c9c9]" />
            <div className="flex-1" />
            <div className="h-[26px] shrink-0 bg-[#f8f8f8] border-t-2 border-[#c9c9c9] flex items-center justify-center"><ScrollArrow /></div>
          </div>
        </div>
        <div className="flex items-center pt-[13px] mr-[-3px]">
          <DlgButton w="w-[158px]">Help</DlgButton>
          <DlgButton w="w-[158px]" cls="ml-[14px] relative pr-[22px]">
            Style
            <svg width="11" height="7" viewBox="0 0 11 7" className="absolute right-[10px] top-[18px]"><path d="M0 0h11L5.500 7z" fill="#666" /></svg>
          </DlgButton>
          <DlgButton w="w-[159px]" cls="ml-[13px]">Apply</DlgButton>
          <DlgButton w="w-[160px]" cls="ml-auto">Cancel</DlgButton>
          <DlgButton w="w-[160px]" cls="ml-[12px] !border-[#5a9be0] !to-[#d5d9e0]">OK</DlgButton>
        </div>
      </div>
    </div>
  </div>
);

// --- main QGIS window behind the dialog ---

const Toolbar = ({ left, right, cls = '' }: { left: ReactNode; right?: ReactNode; cls?: string }) => (
  <div className={`shrink-0 flex items-center pl-[10px] bg-gradient-to-b from-[#f8f8f8] to-[#e9e9e9] border-b-[3px] border-[#b9b9b9] ${cls}`}>
    {left}
    <div className="ml-auto flex items-center">{right}</div>
  </div>
);

const TreeRow = ({ depth = 0, arrow, icon, label }: { depth?: number; arrow?: 'down' | 'right'; icon: ReactNode; label: string }) => (
  <div className="h-[36px] flex items-center whitespace-nowrap" style={{ paddingLeft: 13 + depth * 40 }}>
    <div className="w-[16px] flex justify-center shrink-0">
      {arrow === 'down' && <Caret />}
      {arrow === 'right' && <svg width="9" height="16" viewBox="0 0 9 16"><path d="M0 0l9 8-9 8z" fill="#5b5b5b" /></svg>}
    </div>
    <div className="ml-[17px] w-[32px] flex justify-center shrink-0">{icon}</div>
    <span className="ml-[11px]">{label}</span>
  </div>
);

const LayerRow = ({ children, cls = '' }: { children: ReactNode; cls?: string }) => (
  <div className={`h-[36px] flex items-center whitespace-nowrap font-bold text-[24px] tracking-[-0.5px] ${cls}`}>{children}</div>
);

const Docks = () => (
  <div className="w-[600px] shrink-0 flex flex-col text-[25px] text-[#111] bg-[#ededed]">
    <div className="h-[46px] shrink-0 pl-[8px] pt-[4px] flex items-center text-[21px]">Browser</div>
    <div className="h-[59px] shrink-0 pl-[17px] flex items-center gap-[18px] pb-[8px]">
      <Ico s={32}><rect x="3" y="3" width="34" height="34" fill="none" stroke="#8a8a8a" strokeWidth="3" /><rect x="28" y="28" width="18" height="18" rx="3" fill="#5f9a5f" /><path d="M37 31v12M31 37h12" stroke="#fff" strokeWidth="3.500" /></Ico>
      <Ico s={32}><path d="M6 22A18 18 0 0 1 38 12l5-5v16H27l6-6A11 11 0 0 0 13 22z" fill="#5f97d4" /><path d="M42 26A18 18 0 0 1 10 36l-5 5V25h16l-6 6a11 11 0 0 0 20-5z" fill="#3f76b8" /></Ico>
      <Funnel />
      <Ico s={32}><path d="M6 6h14M6 6v38h14M8 20h12" stroke="#9a9a9a" strokeWidth="2" fill="none" /><rect x="14" y="14" width="10" height="8" fill="#e8912a" /><rect x="14" y="36" width="10" height="8" fill="#e8912a" /><path d="M32 2 46 18h-8v22H26V18h-8z" fill="#5a85b5" stroke="#3f628c" strokeWidth="2" /></Ico>
    </div>
    <div className="h-[410px] shrink-0 bg-white border-t-2 border-l-2 border-[#c5c5c5] overflow-hidden">
      <TreeRow arrow="down" label="Favorites" icon={<Ico s={34}><path d="M24 2l6 16h16L33 29l5 17-14-10-14 10 5-17L2 18h16z" fill="#f8ee7a" stroke="#d1a81c" strokeWidth="3" /></Ico>} />
      <TreeRow depth={1} arrow="right" label="/Users/mymac/Documents" icon={<Folder />} />
      <TreeRow depth={1} arrow="right" label="/Users/mymac/Downloads" icon={<Folder />} />
      <TreeRow depth={1} arrow="right" label="Intro - GIS" icon={<Folder />} />
      <TreeRow depth={1} arrow="right" label="Intro-" icon={<Folder />} />
      <TreeRow arrow="right" label="Spatial Bookmarks" icon={<Ico s={30}><path d="M8 3h36v42H8c-3 0-5-2-5-4V7c0-2 2-4 5-4z" fill="#f2f2f2" stroke="#a3a3a3" strokeWidth="2" /><path d="M24 1h10v20l-5 5-5-5z" fill="#6b96c4" stroke="#3f6a9d" /></Ico>} />
      <TreeRow arrow="right" label="Project Home" icon={<Ico s={30}><path d="M3 3h24l6 8h12v34H3z" fill="#bfe04f" stroke="#8a8a8a" strokeWidth="2" /><path d="M5 14l32 30M36 12 14 44" stroke="#f3f3f3" strokeWidth="3" /><path d="M22 20l10-8 8 8-8 12z" fill="#0f8a2c" /></Ico>} />
      <TreeRow arrow="down" label="Home" icon={<Ico s={30}><path d="M3 5h22l6 7h14v33H3z" fill="#f3f3f3" stroke="#8f8f8f" strokeWidth="3" /><path d="M11 29 24 18l13 11M16 27v12h16V27" fill="none" stroke="#222" strokeWidth="3" /></Ico>} />
      <TreeRow depth={1} arrow="right" label="Applications" icon={<Folder />} />
      <TreeRow depth={1} arrow="right" label="Desktop" icon={<Folder />} />
      <TreeRow depth={1} arrow="down" label="Documents" icon={<Folder open />} />
      <TreeRow depth={2} arrow="right" label="Adobe" icon={<Folder />} />
    </div>
    <div className="h-[29px] shrink-0 border-y-2 border-[#c5c5c5] bg-[#f2f2f2] flex items-center">
      <div className="w-[29px] h-full border-r-2 border-[#c5c5c5] flex items-center justify-center">
        <svg width="9" height="16" viewBox="0 0 9 16"><path d="M9 0 0 8l9 8z" fill="#5b5b5b" /></svg>
      </div>
    </div>
    <div className="h-[66px] shrink-0 pl-[8px] pt-[2px] flex items-center text-[21px]">Layers</div>
    <div className="h-[49px] shrink-0 pl-[17px] flex items-start gap-[19px]">
      <ColorBroom s={31} />
      <Ico s={32}><rect x="3" y="16" width="28" height="24" fill="none" stroke="#8a8a8a" strokeWidth="2.500" /><rect x="11" y="8" width="28" height="24" fill="#f2f2f2" stroke="#8a8a8a" strokeWidth="2.500" /><path d="M24 2v26" stroke="#3f76b8" strokeWidth="3" /><rect x="30" y="30" width="17" height="17" rx="3" fill="#5f9a5f" /><path d="M38 33v11M33 38h11" stroke="#fff" strokeWidth="3" /></Ico>
      <Ico s={36}><path d="M2 20C12 6 32 6 46 24 32 36 12 34 2 20z" fill="#eef3f8" stroke="#8a8a8a" strokeWidth="2" /><circle cx="24" cy="20" r="10" fill="#5f8fc7" stroke="#36567c" strokeWidth="2" /><circle cx="24" cy="20" r="4" fill="#1e3555" /><path d="M34 38h12l-6 6z" fill="#555" /></Ico>
      <div className="-ml-[4px]"><Funnel /></div>
    </div>
    <div className="flex-1 min-h-0 bg-white border-y-2 border-l-2 border-[#c5c5c5] overflow-hidden">
      <LayerRow cls="pl-[46px]"><Check /><span className="w-[28px] shrink-0 flex justify-center"><span className="ml-[29px] w-[2px] h-[2px] bg-[#3f6a9d]" /></span><span className="ml-[30px]">Session3-London Points</span></LayerRow>
      <LayerRow cls="pl-[48px]"><TableIcon /><span className="ml-[14px]">Session3-London Table</span></LayerRow>
      <LayerRow cls="pl-[48px]"><TableIcon /><span className="ml-[14px]">Session3-London Data</span></LayerRow>
      <LayerRow cls="pl-[46px] bg-[#dcdcdc]"><Check /><span className="ml-[12px] w-[32px] h-[32px] shrink-0 bg-[#dcc4a0] border border-[#c9b391]" /><span className="ml-[12px] underline decoration-2">Session3-London LondonBoroughs</span></LayerRow>
      <LayerRow cls="pl-[14px]">
        <Caret />
        <span className="ml-[16px]"><Check /></span>
        <span className="ml-[16px] w-[26px] h-[26px] shrink-0 grid grid-cols-3 grid-rows-3">
          {['#1f3a5f', '#a9c5e2', '#1f3a5f', '#a9c5e2', '#1f3a5f', '#dfe8f2', '#1f3a5f', '#a9c5e2', '#ffffff'].map((c, i) => <span key={i} style={{ background: c }} />)}
        </span>
        <span className="ml-[14px]">Esri Gray (light)</span>
      </LayerRow>
    </div>
  </div>
);

const MainWindow = () => (
  <div className="absolute left-0 top-[49px] w-[2560px] h-[1404px] rounded-[20px] bg-[#ededed] overflow-hidden flex flex-col">
    <div className="h-[58px] shrink-0 bg-[#f7f0f2] border-b-2 border-[#cfcfcf] flex items-center pl-[16px] gap-[16px]">
      <span className="w-[24px] h-[24px] rounded-full bg-[#dcd6d8] border border-[#c4bfc1]" />
      <span className="w-[24px] h-[24px] rounded-full bg-[#dcd6d8] border border-[#c4bfc1]" />
      <span className="w-[24px] h-[24px] rounded-full bg-[#dcd6d8] border border-[#c4bfc1]" />
    </div>
    <Toolbar
      cls="h-[75px]"
      left={
        <>
          <Grip />
          <div className="ml-[24px]"><svg width="32" height="44" viewBox="0 0 32 44"><path d="M1 1h20l10 10v32H1z" fill="#fff" stroke="#7a7a7a" strokeWidth="2" /><path d="M21 1v10h10" fill="#eee" stroke="#7a7a7a" strokeWidth="2" /></svg></div>
          <div className="ml-[27px]"><svg width="46" height="38" viewBox="0 0 46 38"><path d="M1 1h14l3 5h20v10H1z" fill="#f2cf55" stroke="#c9a42c" strokeWidth="2" /><path d="M7 11h38l-7 26H1z" fill="#f9d85c" stroke="#c9a42c" strokeWidth="2" /></svg></div>
          <div className="ml-[24px]"><Ico s={44}><rect x="2" y="2" width="44" height="44" rx="3" fill="#6c95c4" stroke="#3f6a9d" strokeWidth="2" /><rect x="9" y="4" width="30" height="18" fill="#e9e9e9" stroke="#666" /><rect x="12" y="28" width="26" height="16" fill="#e9e9e9" stroke="#666" /><rect x="16" y="31" width="6" height="10" fill="#3f6a9d" /></Ico></div>
        </>
      }
      right={
        <div className="flex items-center pr-[358px]">
          <svg width="44" height="46" viewBox="0 0 44 46" className="mt-[4px]"><rect x="2" y="6" width="40" height="6" fill="#3f5f85" /><path d="M2 1v16M42 1v16" stroke="#3f5f85" strokeWidth="2" /><rect x="1" y="24" width="42" height="21" fill="#cfcfcf" stroke="#666" strokeWidth="2" /><path d="M8 24v10M15 24v7M22 24v10M29 24v7M36 24v10" stroke="#666" strokeWidth="2" /></svg>
          <Caret cls="ml-[14px]" />
          <div className="ml-[16px]"><svg width="44" height="44" viewBox="0 0 44 44"><path d="M8 2h28c3 0 6 3 6 6v16c0 3-3 6-6 6H24l-8 10v-10H8c-3 0-6-3-6-6V8c0-3 3-6 6-6z" fill="#fbeb8f" stroke="#d5ac10" strokeWidth="3" /><ellipse cx="9" cy="36" rx="7" ry="7.500" fill="#8dbd7d" stroke="#666" strokeWidth="2" /></svg></div>
          <div className="ml-[21px] opacity-50"><svg width="48" height="47" viewBox="0 0 48 68" preserveAspectRatio="none"><path d="M20 2h6l2 7 6 3 7-3 4 5-4 6 2 6 6 2v6l-7 2-2 6 3 6-5 4-6-3-6 3-3 6h-6l-2-7-6-3-6 3-4-5 4-6-2-6-6-2v-6l6-2 2-6-4-6 5-4 6 3 6-3z" fill="#e5e5e5" stroke="#aaa" strokeWidth="2" /><circle cx="23" cy="28" r="11" fill="#c7c7c7" /><path d="M24 28l22 36-10-6-6 8z" fill="#fff" stroke="#888" strokeWidth="2" /></svg></div>
          <Caret cls="ml-[12px]" />
          <div className="ml-[16px]"><svg width="44" height="44" viewBox="0 0 44 44"><path d="M2 2h40v30H18L2 42l6-10H2z" fill="#eaf1f5" stroke="#8e8e8e" strokeWidth="3" /><text x="22" y="27" textAnchor="middle" fontFamily="Liberation Serif" fontSize="30" fill="#555">T</text></svg></div>
          <Caret cls="ml-[14px]" />
        </div>
      }
    />
    <Toolbar
      cls="h-[78px]"
      left={
        <>
          <Grip />
          <div className="ml-[16px]"><Ico s={48}><path d="M4 20 28 14 36 44 12 48z" fill="#dc6a33" stroke="#a94a1d" /><path d="M11 12 34 10 36 36 14 38z" fill="#f2ce45" stroke="#b89816" /><path d="M18 2 48 8 42 32 14 28z" fill="#6a97c9" stroke="#3f6a9d" /><rect x="30" y="30" width="18" height="18" rx="3" fill="#5f9a5f" /><path d="M39 33v12M33 39h12" stroke="#fff" strokeWidth="3.500" /></Ico></div>
          <div className="ml-[18px]"><Ico s={48}><circle cx="24" cy="20" r="18" fill="#7ea6d3" /><path d="M16 8l8 4-2 8-8-2zM30 10l8 6-4 8-6-6z" fill="#2f4f78" /><path d="M1 24 24 12l22 12-22 12z" fill="#f2cf3f" stroke="#222" /><path d="M1 24l23 12v13L1 36z" fill="#d2aa10" stroke="#222" /><path d="M24 36l22-12v13L24 49z" fill="#fbf06a" stroke="#222" /><rect x="30" y="31" width="18" height="18" rx="3" fill="#c9a41c" /><path d="M39 34v12M33.500 37l11 6M44.500 37l-11 6" stroke="#fff" strokeWidth="2.500" /></Ico></div>
          <div className="ml-[19px]"><Ico s={48}><path d="M6 6l14 34L32 6M32 6h16" fill="none" stroke="#3f5f85" strokeWidth="2.500" /><circle cx="6" cy="6" r="4" fill="#eee" stroke="#333" strokeWidth="2" /><circle cx="32" cy="6" r="4" fill="#eee" stroke="#333" strokeWidth="2" /><circle cx="20" cy="40" r="4" fill="#eee" stroke="#333" strokeWidth="2" /></Ico></div>
        </>
      }
      right={
        <div className="flex items-center pr-[290px] pt-[4px]">
          <div className="opacity-40 flex items-center gap-[20px] mr-[24px]">
            <svg width="50" height="40" viewBox="0 0 50 40"><path d="M1 14 10 2h30v24H10z" fill="#ddd" stroke="#999" strokeWidth="2" /><rect x="26" y="18" width="22" height="22" rx="3" fill="#c8c8b8" /></svg>
            <svg width="50" height="40" viewBox="0 0 50 40"><path d="M1 14 10 2h30v24H10z" fill="#ddd" stroke="#999" strokeWidth="2" /><text x="25" y="20" textAnchor="middle" fontFamily="DejaVu Sans" fontSize="15" fill="#666">abc</text><rect x="28" y="18" width="22" height="22" rx="3" fill="#c8c8b8" /><path d="M33 36l3-9 7-5 2 2-5 7z" fill="#fff" /></svg>
          </div>
          <Grip />
          <div className="ml-[15px]"><svg width="48" height="48" viewBox="0 0 50 72" preserveAspectRatio="none"><circle cx="25" cy="25" r="24" fill="#6d98c8" stroke="#2f4f78" strokeWidth="1.5" /><path d="M3 20h44M3 34h44M25 1v48M14 4c-8 14-8 30 0 42M36 4c8 14 8 30 0 42" fill="none" stroke="#e3ecf5" strokeWidth="1.500" /><path d="M12 42l8-14h10l8 14" fill="#000" /><circle cx="13" cy="60" r="8" fill="#fff" stroke="#000" strokeWidth="5" /><circle cx="37" cy="60" r="8" fill="#fff" stroke="#000" strokeWidth="5" /><rect x="10" y="40" width="30" height="14" fill="#000" /></svg></div>
          <div className="ml-[27px]"><Grip /></div>
          <div className="ml-[20px]"><svg width="43" height="42" viewBox="0 0 44 62" preserveAspectRatio="none"><path d="M22 2C10 2 10 8 10 14v6h14v3H6C0 23 0 30 0 34c0 6 2 11 8 11h4v-8c0-5 4-8 8-8h12c4 0 6-3 6-7V10c0-5-6-8-16-8z" fill="#3f7ab0" /><path d="M22 58c12 0 12-6 12-12v-6H20v-3h18c6 0 6-7 6-11 0-6-2-11-8-11h-4v8c0 5-4 8-8 8H12c-4 0-6 3-6 7v12c0 5 6 8 16 8z" fill="#f7cf42" /><circle cx="15" cy="9" r="2.500" fill="#fff" /><path d="M30 42l12 8-12 8" fill="none" stroke="#555" strokeWidth="3" /></svg></div>
          <div className="ml-[29px]"><Grip /></div>
          <div className="ml-[16px]"><svg width="41" height="43" viewBox="0 0 41 43"><rect x="1" y="1" width="39" height="41" fill="#6c97c9" stroke="#1d2a3d" strokeWidth="2" /><rect x="1" y="1" width="10" height="41" fill="#2b3b52" /><text x="25" y="31" textAnchor="middle" fontFamily="Liberation Serif" fontSize="28" fill="#fff">?</text></svg></div>
          <div className="ml-[30px]"><Grip /></div>
        </div>
      }
    />
    <div className="h-[76px] shrink-0 flex items-center pl-[10px] pt-[4px] bg-gradient-to-b from-[#f8f8f8] to-[#e9e9e9] border-b-[3px] border-[#b9b9b9]">
      <Grip />
      <div className="ml-[18px]"><svg width="44" height="42" viewBox="0 0 46 46"><rect x="1" y="1" width="42" height="38" fill="#e9e9e9" stroke="#444" strokeWidth="2" strokeDasharray="5 3" /><rect x="3" y="3" width="28" height="28" fill="#fbe64e" stroke="#c9a21c" strokeWidth="3" /><path d="M18 15l24 20-9 1 6 8-5 2-6-8-6 6z" fill="#fff" stroke="#111" strokeWidth="2" /></svg></div>
      <Caret cls="ml-[14px]" />
      <div className="ml-[20px]"><svg width="38" height="38" viewBox="0 0 40 38"><rect x="7" y="12" width="32" height="25" fill="#fbe64e" stroke="#c9a21c" strokeWidth="2" /><rect x="1" y="1" width="30" height="26" fill="#d7dde2" stroke="#888" strokeWidth="2" /><rect x="5" y="5" width="22" height="6" fill="#fff" stroke="#888" /><rect x="5" y="15" width="22" height="6" fill="#fff" stroke="#888" /></svg></div>
      <Caret cls="ml-[16px]" />
    </div>
    <div className="flex-1 min-h-0 flex">
      <Docks />
      <div className="w-[1960px] shrink-0 pt-[1px] flex flex-col">
        <div className="h-[3px] bg-[#ededed] shrink-0 border-b border-[#b5b5b5]" />
        <div className="flex-1 overflow-hidden border-b border-[#b5b5b5]"><MapCanvas /></div>
      </div>
    </div>
    <div className="h-[61px] shrink-0 bg-[#ededed] flex items-center font-['Inter',sans-serif] text-[21.500px] text-[#222]">
      <div className="ml-[8px] w-[400px] h-[47px] rounded-[6px] border-2 border-[#c5c5c5] bg-white flex items-center pl-[18px] font-['DejaVu_Sans',sans-serif] text-[25px] text-[#777]">
        <svg width="30" height="30" viewBox="0 0 30 30"><circle cx="13" cy="13" r="10" fill="none" stroke="#888" strokeWidth="3" /><path d="M20 20l9 9" stroke="#888" strokeWidth="3" /></svg>
        <span className="ml-[10px]">Type to locate (⌘K)</span>
      </div>
      <div className="ml-auto flex items-center">
        <span>Rotation</span>
        <div className="ml-[20px] w-[185px] h-[43px] rounded-[4px] border-2 border-[#a8a8a8] bg-white flex items-center text-[#111] text-[25px]">
          <span className="flex-1 pl-[8px]">0,0 °</span>
          <div className="w-[29px] h-full border-l-2 border-[#a8a8a8] flex flex-col items-center justify-center gap-[4px]">
            <ScrollArrow up />
            <ScrollArrow />
          </div>
        </div>
        <div className="ml-[14px]"><Check /></div>
        <span className="ml-[11px]">Render</span>
        <div className="ml-[32px]"><Ico s={30}><circle cx="24" cy="24" r="21" fill="#ddd" stroke="#666" strokeWidth="3" /><path d="M4 16h40M2 24h44M4 32h40M24 3v42M14 6c-6 12-6 24 0 36M34 6c6 12 6 24 0 36" fill="none" stroke="#666" strokeWidth="2.500" /></Ico></div>
        <span className="ml-[7px]">EPSG:27700</span>
        <div className="ml-[48px] mr-[2px]"><svg width="44" height="40" viewBox="0 0 44 40"><path d="M22 2c11 0 20 7 20 16s-9 15-17 15l8 6-14-6C10 31 2 27 2 18 2 9 11 2 22 2z" fill="#555" /><circle cx="13" cy="18" r="3" fill="#fff" /><circle cx="22" cy="18" r="3" fill="#fff" /><circle cx="31" cy="18" r="3" fill="#fff" /></svg></div>
      </div>
    </div>
  </div>
);

const menus = ['Project', 'Edit', 'View', 'Layer', 'Settings', 'Plugins', 'Vector', 'Raster', 'Database', 'Web', 'Mesh', 'Processing', 'Window', 'Help'];

const MenuBar = () => (
  <div className="h-[49px] w-full bg-gradient-to-r from-[#7d5f9b] via-[#4f72a8] to-[#1f72ae] flex items-center pl-[43px] text-[26px] text-white font-['Inter',sans-serif] [text-shadow:0_1px_3px_rgba(0,0,0,0.25)]">
    <svg width="30" height="34" viewBox="0 0 24 28" className="shrink-0"><path d="M17 7c-2 0-3 1-5 1S9 7 7 7c-3 0-6 3-6 8 0 6 4 12 7 12 2 0 2-1 4-1s2 1 4 1c3 0 5-4 6-7-3-1-4-3-4-6 0-2 1-4 3-5-1-1-2-2-4-2zM16 0c-2 0-5 2-5 6 3 0 5-3 5-6z" fill="#f2f2f2" /></svg>
    <b className="ml-[42px] font-bold tracking-[1px]">QGIS-LTR</b>
    <div className="ml-[33px] flex items-center gap-[40px]">
      {menus.map((m) => <span key={m}>{m}</span>)}
    </div>
    <div className="ml-[34px] flex items-center">
      <svg width="52" height="26" viewBox="0 0 52 26"><rect x="1" y="2" width="44" height="22" rx="6" fill="none" stroke="#c9dcec" strokeWidth="2" /><rect x="4" y="5" width="30" height="16" rx="3" fill="#eef2f8" /><path d="M48 9c2 1 2 7 0 8z" fill="#c9dcec" /></svg>
      <div className="ml-[35px]"><svg width="34" height="28" viewBox="0 0 34 28"><path d="M2 9a22 22 0 0 1 30 0M7 15a15 15 0 0 1 20 0M12 20a8 8 0 0 1 10 0" fill="none" stroke="#fff" strokeWidth="3.500" strokeLinecap="round" /><circle cx="17" cy="25" r="3" fill="#fff" /></svg></div>
      <div className="ml-[40px]"><svg width="26" height="28" viewBox="0 0 26 28"><circle cx="11" cy="11" r="9" fill="none" stroke="#fff" strokeWidth="2.500" /><path d="M17 18l7 9" stroke="#fff" strokeWidth="3" /></svg></div>
      <div className="ml-[38px]"><svg width="30" height="30" viewBox="0 0 30 30"><rect x="1" y="1" width="28" height="12" rx="6" fill="none" stroke="#fff" strokeWidth="2" /><circle cx="8" cy="7" r="3.500" fill="#fff" /><rect x="0" y="16" width="30" height="14" rx="7" fill="#fff" /><circle cx="22" cy="23" r="4" fill="#2a73ae" /></svg></div>
      <span className="ml-[33px] whitespace-nowrap">Wed 20 Oct at&nbsp; 12:06</span>
    </div>
  </div>
);

export default function App() {
  return (
    <div className="relative w-[2560px] h-[1460px] overflow-hidden bg-gradient-to-r from-[#b82a5a] via-[#3a2a55] to-[#1c5c98] font-['DejaVu_Sans',sans-serif] text-[25px] text-[#111]">
      {/* desktop strip and dock peeking out under the windows */}
      <div className="absolute left-0 bottom-0 w-full h-[20px] bg-gradient-to-r from-[#16243f] via-[#1c1a30] to-[#5a2a48]" />
      <div className="absolute left-[400px] top-[1457px] w-[1757px] h-[12px] rounded-t-[12px] bg-[#7a5a80]" />
      <MenuBar />
      <MainWindow />
      <Dialog />
    </div>
  );
}
